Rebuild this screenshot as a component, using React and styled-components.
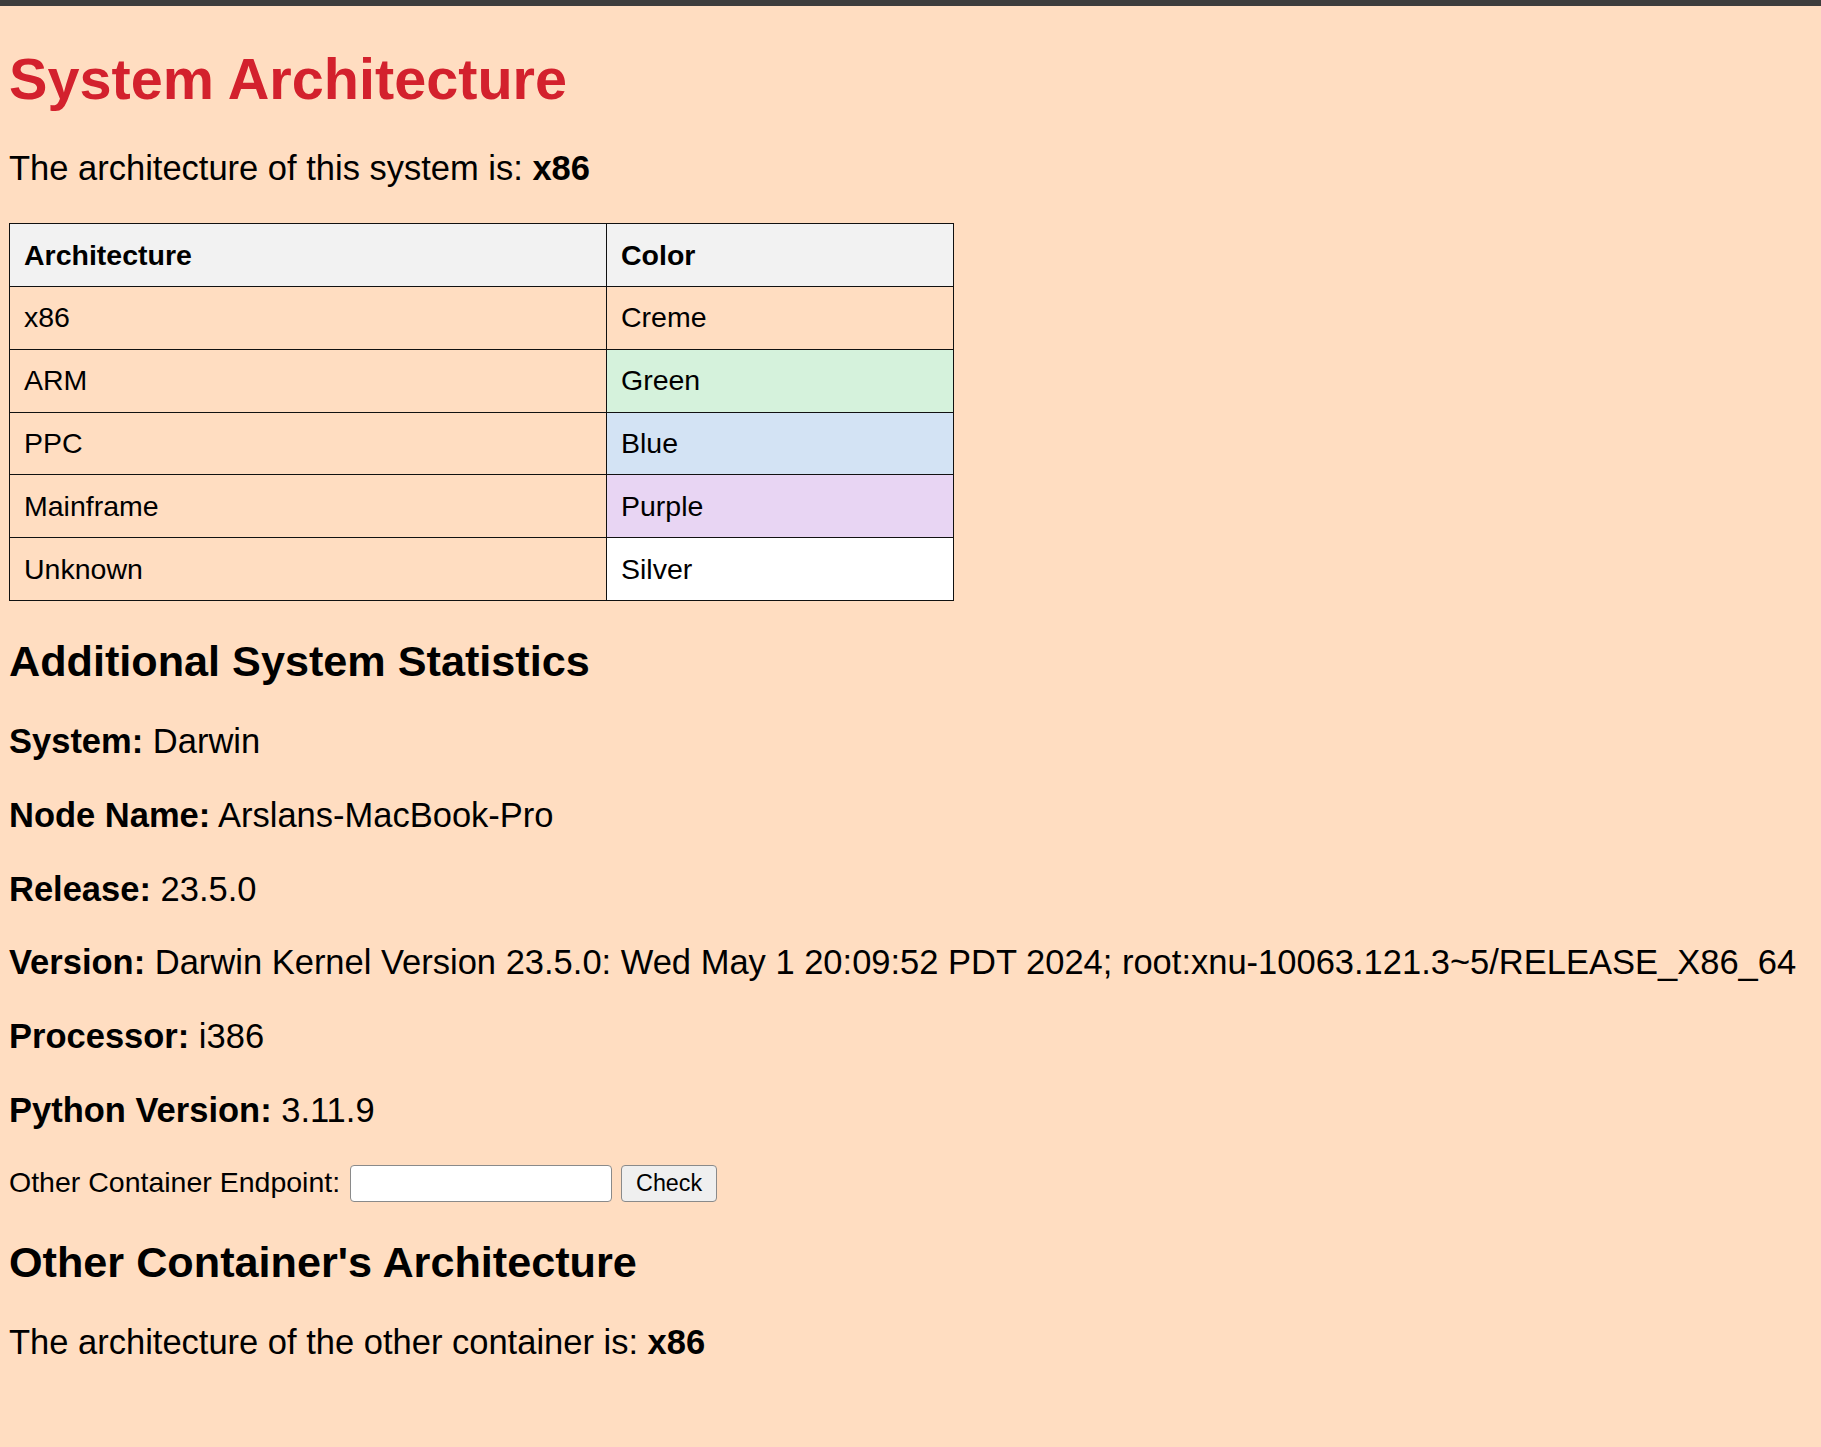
import React from "react";
import styled, { createGlobalStyle } from "styled-components";

const GlobalStyle = createGlobalStyle`
  html, body {
    margin: 0;
    padding: 0;
    background: #ffddc1;
    min-height: 100%;
  }
  body {
    font-family: "Liberation Sans", Arial, sans-serif;
    font-size: 28.5px;
    color: #000;
  }
`;

const TopBar = styled.div`
  height: 6px;
  background: #3d3d3d;
`;

const Page = styled.div`
  padding: 0 9px 60px 9px;
  min-height: 1441px;
  box-sizing: border-box;
  display: flow-root;
`;

const Title = styled.h1`
  font-size: 57.6px;
  font-weight: bold;
  color: #d3212d;
  margin: 40px 0 37px 0;
`;

const Paragraph = styled.p`
  font-size: 34.5px;
  margin: 34.8px 0;
  white-space: nowrap;
`;

const ArchTable = styled.table`
  border-collapse: collapse;
  width: 944px;
  table-layout: fixed;
  font-size: 28.5px;
  margin: 35.3px 0 0 0;
`;

const HeadCell = styled.th`
  box-sizing: border-box;
  text-align: left;
  font-weight: bold;
  background: #f2f2f2;
  border: 1px solid #111;
  padding: 14.4px 14px;
  width: ${(p) => p.$width}px;
`;

const Cell = styled.td`
  border: 1px solid #111;
  padding: 14.4px 14px;
  background: ${(p) => p.$bg || "transparent"};
`;

const SubTitle = styled.h2`
  font-size: 43.2px;
  font-weight: bold;
  margin: 36px 0;
`;

const CheckForm = styled.form`
  display: flex;
  align-items: center;
  gap: 9.5px;
  font-size: 28.5px;
  margin: 0;
`;

const Label = styled.label`
  line-height: 1.1;
  position: relative;
  top: -1px;
`;

const EndpointInput = styled.input`
  box-sizing: border-box;
  width: 262px;
  height: 37.5px;
  border: 1.5px solid #8a8a8a;
  border-radius: 4px;
  background: #fff;
  font-family: "Liberation Sans", Arial, sans-serif;
  font-size: 23.3px;
  padding: 2px 4px;
`;

const CheckButton = styled.button`
  box-sizing: border-box;
  width: 96px;
  height: 37.5px;
  border: 1.5px solid #8a8a8a;
  border-radius: 4px;
  background: #efefef;
  font-family: "Liberation Sans", Arial, sans-serif;
  font-size: 23.3px;
  color: #000;
  padding: 0;
`;

const rows = [
  { arch: "x86", color: "Creme", bg: "transparent" },
  { arch: "ARM", color: "Green", bg: "#d5f2dc" },
  { arch: "PPC", color: "Blue", bg: "#d3e3f4" },
  { arch: "Mainframe", color: "Purple", bg: "#e8d5f3" },
  { arch: "Unknown", color: "Silver", bg: "#ffffff" },
];

const stats = [
  ["System:", "Darwin"],
  ["Node Name:", "Arslans-MacBook-Pro"],
  ["Release:", "23.5.0"],
  [
    "Version:",
    "Darwin Kernel Version 23.5.0: Wed May 1 20:09:52 PDT 2024; root:xnu-10063.121.3~5/RELEASE_X86_64",
  ],
  ["Processor:", "i386"],
  ["Python Version:", "3.11.9"],
];

export default function App() {
  return (
    <>
      <GlobalStyle />
      <TopBar />
      <Page>
        <Title>System Architecture</Title>
        <Paragraph>
          The architecture of this system is: <strong>x86</strong>
        </Paragraph>

        <ArchTable>
          <thead>
            <tr>
              <HeadCell $width={597}>Architecture</HeadCell>
              <HeadCell $width={347}>Color</HeadCell>
            </tr>
          </thead>
          <tbody>
            {rows.map((r) => (
              <tr key={r.arch}>
                <Cell>{r.arch}</Cell>
                <Cell $bg={r.bg}>{r.color}</Cell>
              </tr>
            ))}
          </tbody>
        </ArchTable>

        <SubTitle>Additional System Statistics</SubTitle>
        {stats.map(([k, v]) => (
          <Paragraph key={k}>
            <strong>{k}</strong> {v}
          </Paragraph>
        ))}

        <CheckForm onSubmit={(e) => e.preventDefault()}>
          <Label htmlFor="endpoint">Other Container Endpoint:</Label>
          <EndpointInput id="endpoint" type="text" />
          <CheckButton type="submit">Check</CheckButton>
        </CheckForm>

        <SubTitle>Other Container's Architecture</SubTitle>
        <Paragraph>
          The architecture of the other container is: <strong>x86</strong>
        </Paragraph>
      </Page>
    </>
  );
}
